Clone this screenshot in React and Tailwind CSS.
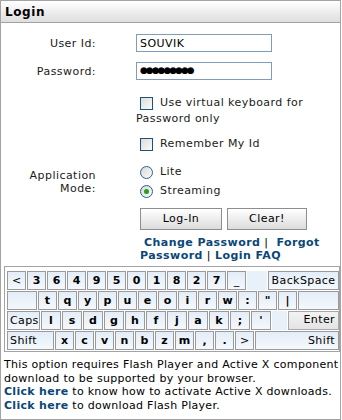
import React from "react";

const Key = ({ children, w = "w-[19px]", bold = true, align = "justify-center", px = "" }) => (
  <div
    className={`h-[19px] ${w} shrink-0 border border-[#9a9a9a] bg-gradient-to-b from-[#e4edf8] to-[#f4f8fc] flex items-center ${align} ${px} ${bold ? "font-bold" : "font-normal"} text-[11px] leading-none text-black`}
  >
    {children}
  </div>
);

const Blank = ({ w = "w-[20px]" }) => <div className={`h-[19px] ${w} shrink-0 bg-[#e8f0f9]`} />;

const Checkbox = () => (
  <span className="inline-block align-middle w-[13px] h-[13px] border border-[#1c5180] bg-gradient-to-br from-[#dcdcd7] to-[#fbfbfa] shrink-0" />
);

const Radio = ({ checked }) => (
  <span className="relative inline-flex items-center justify-center w-[13px] h-[13px] rounded-full border border-[#2f5f8f] bg-gradient-to-br from-[#d8d8d3] to-[#fbfbfa] shrink-0">
    {checked && <span className="w-[5px] h-[5px] rounded-full bg-[#21a121]" />}
  </span>
);

export default function App() {
  const row2 = ["t", "q", "y", "p", "u", "e", "o", "i", "r", "w", ":", "\"", "|"];
  const row3 = ["l", "s", "d", "g", "h", "f", "j", "a", "k", ";", "'"];
  const row4 = ["x", "c", "v", "n", "b", "z", "m", ",", ".", ">"];
  return (
    <div className="w-[342px] h-[420px] bg-white font-['DejaVu_Sans',Verdana,sans-serif] text-[11px] tracking-[0.45px] text-[#1a1a1a]">
      <div className="w-[341px] h-[420px] border border-[#a3a3a3] flex flex-col">
        <div className="h-[22px] shrink-0 border-b border-[#a3a3a3] bg-gradient-to-b from-white to-[#dedede] flex items-center pl-[4px] font-bold text-[12px] tracking-[0.6px] text-black">
          Login
        </div>

        {/* User Id */}
        <div className="flex items-center mt-[11px] h-[18px] shrink-0">
          <div className="w-[95px] h-[18px] flex items-center justify-end pt-[3px]">User Id:</div>
          <div className="ml-[40px] w-[136px] h-[18px] border border-[#7f9db9] flex items-center pl-[3px] pt-[2px] text-black">
            SOUVIK
          </div>
        </div>

        {/* Password */}
        <div className="flex items-center mt-[10px] h-[18px] shrink-0">
          <div className="w-[95px] h-[18px] flex items-center justify-end pt-[3px]">Password:</div>
          <div className="ml-[40px] w-[136px] h-[18px] border border-[#7f9db9] flex items-center pl-[3px] text-[9px] tracking-[-2px] text-black">
            ●●●●●●●●●
          </div>
        </div>

        {/* Virtual keyboard */}
        <div className="flex mt-[15px] shrink-0">
          <div className="w-[95px]" />
          <div className="ml-[40px] w-[186px] leading-[16px]">
            <span className="inline-flex items-center h-[16px] align-top ml-[4px] mr-[7px]">
              <Checkbox />
            </span>
            Use virtual keyboard for Password only
          </div>
        </div>

        {/* Remember */}
        <div className="flex mt-[9px] shrink-0">
          <div className="w-[95px]" />
          <div className="ml-[40px] flex items-center h-[16px]">
            <span className="ml-[4px] mr-[7px] flex"><Checkbox /></span>
            Remember My Id
          </div>
        </div>

        {/* Application Mode */}
        <div className="flex items-center mt-[11px] shrink-0">
          <div className="w-[95px] text-right leading-[13px]">
            Application
            <br />
            Mode:
          </div>
          <div className="ml-[40px] flex flex-col">
            <div className="flex items-center h-[19px]">
              <span className="ml-[4px] mr-[7px] flex"><Radio /></span>
              Lite
            </div>
            <div className="flex items-center h-[19px]">
              <span className="ml-[4px] mr-[7px] flex"><Radio checked /></span>
              Streaming
            </div>
          </div>
        </div>

        {/* Buttons */}
        <div className="flex mt-[7px] shrink-0">
          <div className="w-[95px]" />
          <div className="ml-[44px] flex gap-[5px]">
            <div className="w-[82px] h-[22px] border border-[#8e8e8e] bg-gradient-to-b from-white to-[#dcdcdc] flex items-center justify-center text-black">
              Log-In
            </div>
            <div className="w-[80px] h-[22px] border border-[#8e8e8e] bg-gradient-to-b from-white to-[#dcdcdc] flex items-center justify-center text-black">
              Clear!
            </div>
          </div>
        </div>

        {/* Links */}
        <div className="flex mt-[6px] shrink-0">
          <div className="w-[95px]" />
          <div className="ml-[44px] w-[186px] leading-[13px] flex flex-col">
            <div className="flex whitespace-pre">
              <span className="font-bold text-[#0b4777] ml-[4px]">Change Password</span>
              <span className="text-black"> |  </span>
              <span className="font-bold text-[#0b4777]">Forgot</span>
            </div>
            <div className="flex whitespace-pre">
              <span className="font-bold text-[#0b4777]">Password</span>
              <span className="text-black"> | </span>
              <span className="font-bold text-[#0b4777]">Login FAQ</span>
            </div>
          </div>
        </div>

        {/* Keyboard */}
        <div className="mt-[4px] ml-[3px] w-[336px] shrink-0 border border-[#a3a3a3] pt-[4px] pb-[1px] pl-[2px] flex flex-col gap-[1px] tracking-normal">
          <div className="flex gap-[1px]">
            <Key bold={false}>&lt;</Key>
            {["3", "6", "4", "9", "5", "0", "1", "8", "2", "7"].map((k) => (
              <Key key={k}>{k}</Key>
            ))}
            <Key bold={false}>_</Key>
            <Blank w="w-[20px]" />
            <Key w="flex-1" bold={false}>
              <span className="tracking-[0.4px]">BackSpace</span>
            </Key>
          </div>
          <div className="flex gap-[1px]">
            <Key w="w-[30px]"> </Key>
            {row2.map((k) => (
              <Key key={k}>{k}</Key>
            ))}
            <Key w="flex-1"> </Key>
          </div>
          <div className="flex gap-[1px]">
            <Key w="w-[33px]" bold={false} align="justify-start" px="pl-[2px]">
              <span className="tracking-[0.4px]">Caps</span>
            </Key>
            {row3.map((k) => (
              <Key key={k} w="w-[20px]">{k}</Key>
            ))}
            <Blank w="w-[15px]" />
            <div className="h-[19px] flex-1 border border-[#a8a8a8] bg-gradient-to-b from-[#f3f3f3] to-[#e4e4e4] flex items-center justify-end pr-[3px] text-black tracking-[0.4px]">
              Enter
            </div>
          </div>
          <div className="flex gap-[1px]">
            <Key w="w-[47px]" bold={false} align="justify-start" px="pl-[2px]">
              <span className="tracking-[0.4px]">Shift</span>
            </Key>
            {row4.map((k) => (
              <Key key={k} bold={k !== ">"}>{k}</Key>
            ))}
            <Key w="flex-1" bold={false} align="justify-end" px="pr-[3px]">
              <span className="tracking-[0.4px]">Shift</span>
            </Key>
          </div>
        </div>

        {/* Info */}
        <div className="mt-[6px] pl-[3px] leading-[13.7px] text-black whitespace-nowrap tracking-[0.3px]">
          <div>This option requires Flash Player and Active X component</div>
          <div>download to be supported by your browser.</div>
          <div>
            <span className="font-bold text-[#0b4777]">Click here</span> to know how to activate Active X downloads.
          </div>
          <div>
            <span className="font-bold text-[#0b4777]">Click here</span> to download Flash Player.
          </div>
        </div>
      </div>
    </div>
  );
}
